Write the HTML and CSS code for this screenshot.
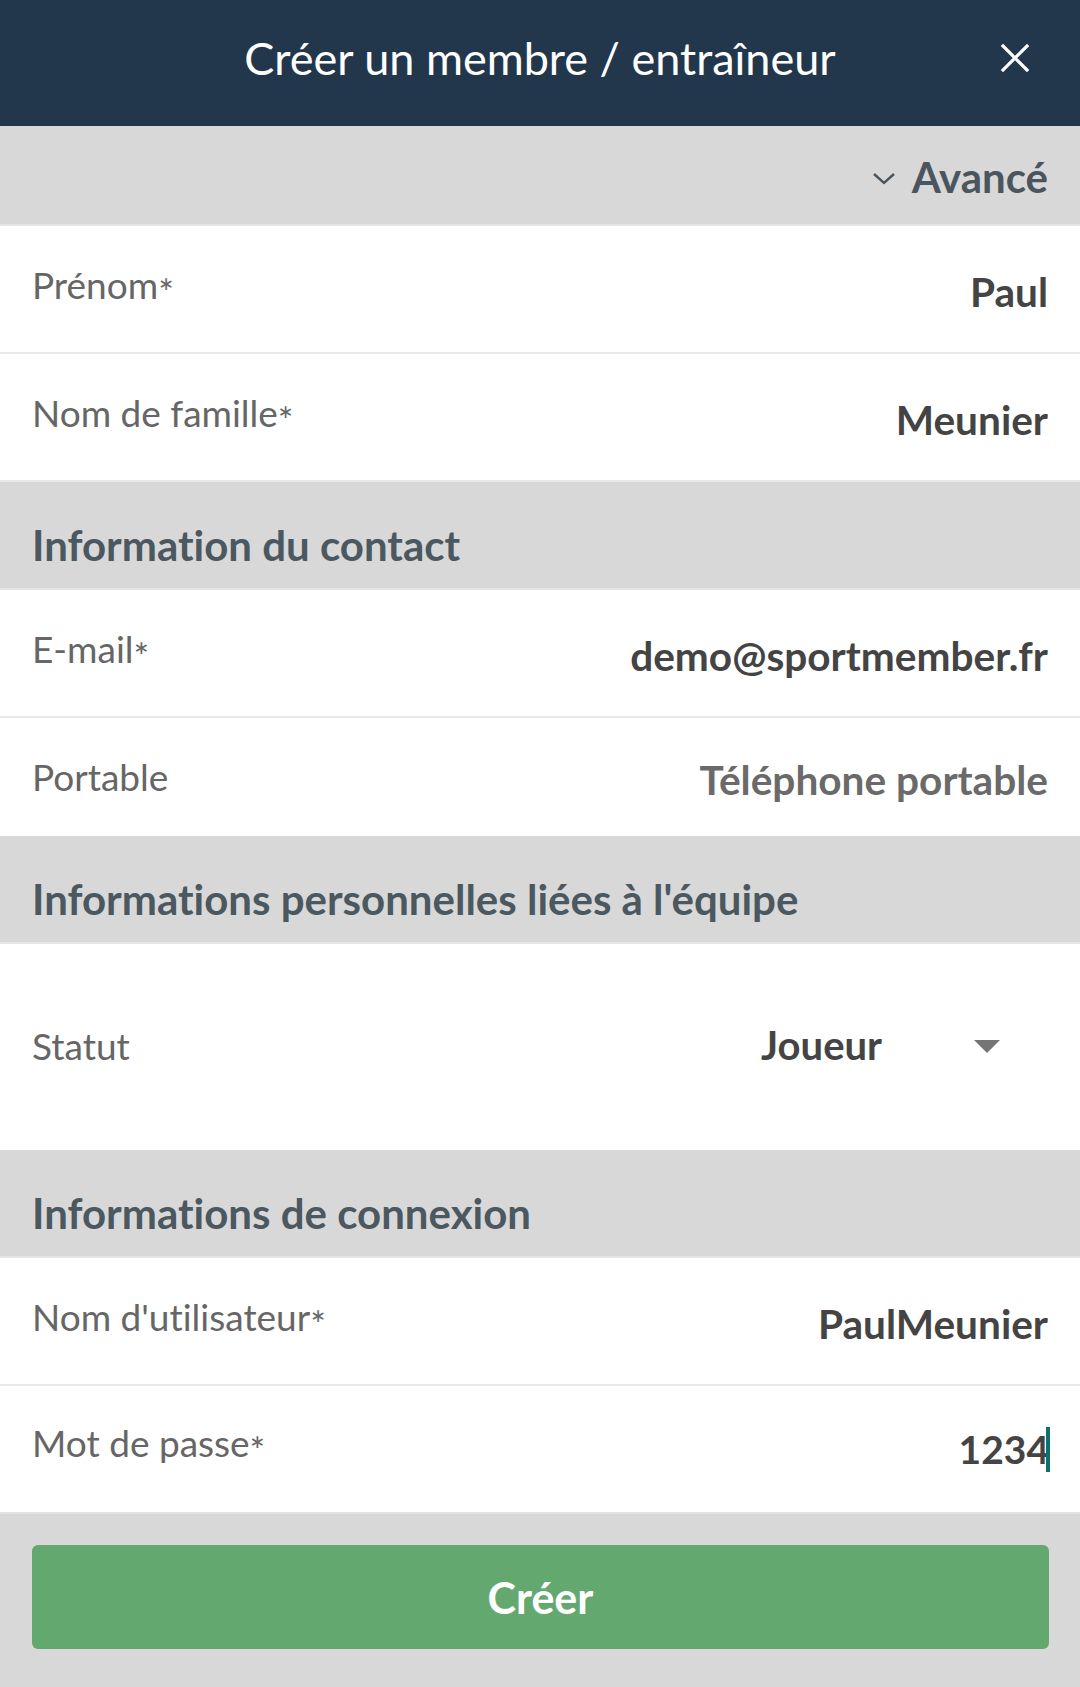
FILE: index.html
```html
<!DOCTYPE html>
<html lang="fr">
<head>
<meta charset="utf-8">
<link rel="stylesheet" href="styles.css">
</head>
<body>
<div class="screen">
  <header class="topbar">
    <span></span>
    <h1 class="title">Créer un membre / entraîneur</h1>
    <span class="close">
      <svg width="30" height="30" viewBox="0 0 30 30"><path d="M3 3 L27 27 M27 3 L3 27" stroke="#fff" stroke-width="3.2" stroke-linecap="square" fill="none"/></svg>
    </span>
  </header>

  <div class="advanced">
    <svg class="chev" width="24" height="14" viewBox="0 0 24 14"><path d="M2 3 L12 12 L22 3" stroke="#4a555e" stroke-width="2.4" fill="none"/></svg>
    <span>Avancé</span>
  </div>

  <div class="row"><span class="label">Prénom<span class="req">*</span></span><span class="value">Paul</span></div>
  <div class="row"><span class="label">Nom de famille<span class="req">*</span></span><span class="value">Meunier</span></div>

  <div class="section">Information du contact</div>
  <div class="row"><span class="label">E-mail<span class="req">*</span></span><span class="value">demo@sportmember.fr</span></div>
  <div class="row short"><span class="label">Portable</span><span class="value placeholder">Téléphone portable</span></div>

  <div class="section">Informations personnelles liées à l'équipe</div>
  <div class="row tall">
    <span class="label statut">Statut</span>
    <span class="select"><span class="value">Joueur</span><svg width="26" height="14" viewBox="0 0 26 14"><path d="M0 0 H26 L13 13 Z" fill="#757575"/></svg></span>
  </div>

  <div class="section">Informations de connexion</div>
  <div class="row"><span class="label">Nom d'utilisateur<span class="req">*</span></span><span class="value">PaulMeunier</span></div>
  <div class="row last"><span class="label">Mot de passe<span class="req">*</span></span><span class="value pwd">1234<span class="caret"></span></span></div>

  <div class="footer">
    <button class="create">Créer</button>
  </div>
</div>
</body>
</html>
```

FILE: styles.css
```css
* { box-sizing: border-box; }
html, body { margin: 0; padding: 0; }
body {
  width: 1080px;
  height: 1687px;
  overflow: hidden;
  background: #d8d8d8;
  font-family: Lato, "Open Sans", "Liberation Sans", sans-serif;
  font-variant-ligatures: none;
}
.screen { display: flex; flex-direction: column; }

.topbar {
  height: 126px;
  background: #22374b;
  display: grid;
  grid-template-columns: 1fr auto 1fr;
  align-items: center;
  padding: 0 50px 10px 50px;
}
.title {
  margin: 0;
  color: #ffffff;
  font-weight: 400;
  font-size: 45px;
}
.close { justify-self: end; display: flex; }

.advanced {
  height: 100px;
  background: #d8d8d8;
  display: flex;
  justify-content: flex-end;
  align-items: center;
  gap: 16px;
  padding: 4px 32px 0 32px;
  color: #4a555e;
  font-weight: 700;
  font-size: 42px;
  border-bottom: 2px solid #e4e4e4;
}
.chev { margin-top: 2px; }

.row {
  height: 128px;
  background: #fff;
  display: flex;
  justify-content: space-between;
  align-items: center;
  padding: 0 32px;
  border-bottom: 2px solid #e8e8e8;
}
.row.short { height: 118px; border-bottom: none; }
.row.tall { height: 206px; border-bottom: none; }
.row.last { height: 126px; border-bottom: none; padding-bottom: 4px; }

.label {
  color: #666666;
  font-size: 37px;
  font-weight: 400;
  margin-top: -2px;
}
.label.statut { margin-top: -4px; }
.req { vertical-align: -0.2em; font-size: 1em; }
.value {
  color: #444444;
  font-size: 40.6px;
  font-weight: 700;
  margin-top: 4px;
}
.value.placeholder { color: #6a6a6a; }
.pwd { display: flex; align-items: center; font-size: 39px; margin-right: -2px; }
.caret { width: 4px; height: 45px; background: #10716c; margin-left: -3px; }

.select { display: flex; align-items: center; gap: 92px; padding-right: 48px; }
.select .value { margin-top: -4px; font-size: 40px; }

.section {
  height: 108px;
  background: #d8d8d8;
  display: flex;
  align-items: center;
  padding: 20px 32px 0 32px;
  color: #4b5860;
  font-weight: 700;
  font-size: 42px;
  border-bottom: 2px solid #e6e6e6;
}

.footer {
  flex: 1;
  height: 177px;
  background: #d8d8d8;
  padding: 31px 31px 0 32px;
  border-top: 2px solid #e2e2e2;
}
.create {
  width: 100%;
  height: 104px;
  border: none;
  border-radius: 6px;
  background: #63a86f;
  color: #ffffff;
  font-family: Lato, "Open Sans", "Liberation Sans", sans-serif;
  font-weight: 700;
  font-size: 43px;
  padding: 0;
}
```
